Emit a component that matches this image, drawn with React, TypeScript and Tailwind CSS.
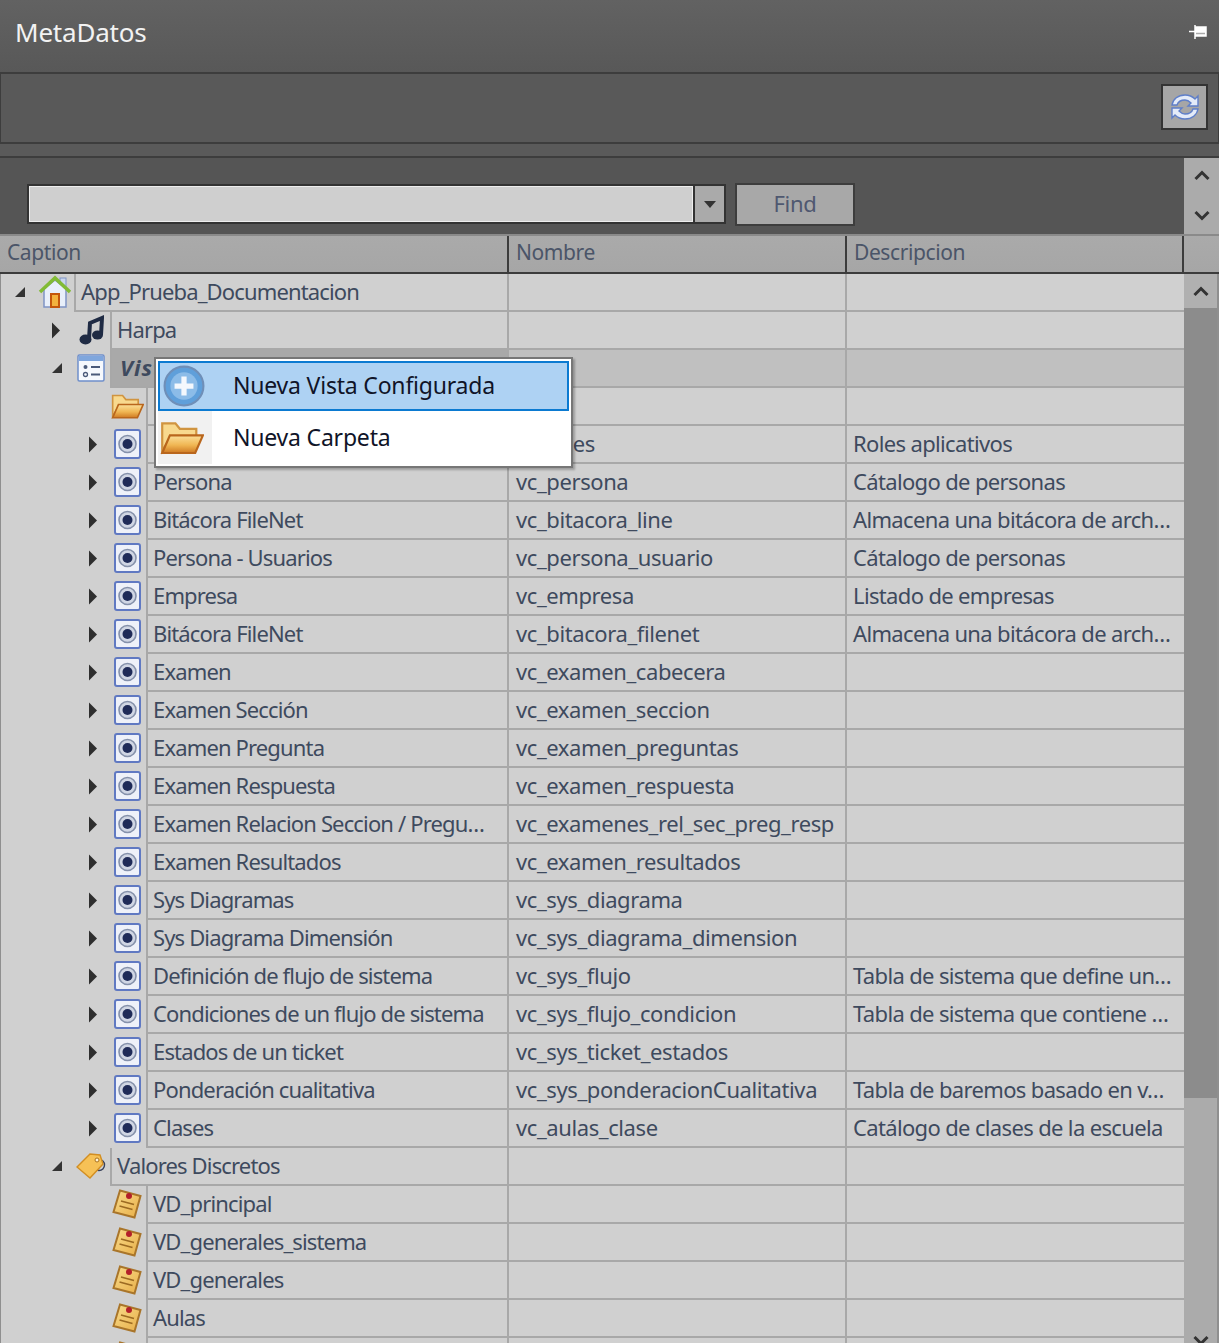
import type { ReactNode } from 'react';

type IconKind = 'home' | 'music' | 'list' | 'folder' | 'view' | 'tag' | 'note';

interface RowData {
  level: 0 | 1 | 2;
  toggle?: 'open' | 'closed';
  icon: IconKind;
  caption?: string;
  name?: string;
  description?: string;
  selected?: boolean;
}

const rows: RowData[] = [
  { level: 0, toggle: 'open', icon: 'home', caption: 'App_Prueba_Documentacion' },
  { level: 1, toggle: 'closed', icon: 'music', caption: 'Harpa' },
  { level: 1, toggle: 'open', icon: 'list', caption: 'Vistas Configuradas', selected: true },
  { level: 2, icon: 'folder', caption: 'Carpeta' },
  { level: 2, toggle: 'closed', icon: 'view', caption: 'Roles', name: 'vc_roles', description: 'Roles aplicativos' },
  { level: 2, toggle: 'closed', icon: 'view', caption: 'Persona', name: 'vc_persona', description: 'Cátalogo de personas' },
  { level: 2, toggle: 'closed', icon: 'view', caption: 'Bitácora FileNet', name: 'vc_bitacora_line', description: 'Almacena una bitácora de arch…' },
  { level: 2, toggle: 'closed', icon: 'view', caption: 'Persona - Usuarios', name: 'vc_persona_usuario', description: 'Cátalogo de personas' },
  { level: 2, toggle: 'closed', icon: 'view', caption: 'Empresa', name: 'vc_empresa', description: 'Listado de empresas' },
  { level: 2, toggle: 'closed', icon: 'view', caption: 'Bitácora FileNet', name: 'vc_bitacora_filenet', description: 'Almacena una bitácora de arch…' },
  { level: 2, toggle: 'closed', icon: 'view', caption: 'Examen', name: 'vc_examen_cabecera' },
  { level: 2, toggle: 'closed', icon: 'view', caption: 'Examen Sección', name: 'vc_examen_seccion' },
  { level: 2, toggle: 'closed', icon: 'view', caption: 'Examen Pregunta', name: 'vc_examen_preguntas' },
  { level: 2, toggle: 'closed', icon: 'view', caption: 'Examen Respuesta', name: 'vc_examen_respuesta' },
  { level: 2, toggle: 'closed', icon: 'view', caption: 'Examen Relacion Seccion / Pregu…', name: 'vc_examenes_rel_sec_preg_resp' },
  { level: 2, toggle: 'closed', icon: 'view', caption: 'Examen Resultados', name: 'vc_examen_resultados' },
  { level: 2, toggle: 'closed', icon: 'view', caption: 'Sys Diagramas', name: 'vc_sys_diagrama' },
  { level: 2, toggle: 'closed', icon: 'view', caption: 'Sys Diagrama Dimensión', name: 'vc_sys_diagrama_dimension' },
  { level: 2, toggle: 'closed', icon: 'view', caption: 'Definición de flujo de sistema', name: 'vc_sys_flujo', description: 'Tabla de sistema que define un…' },
  { level: 2, toggle: 'closed', icon: 'view', caption: 'Condiciones de un flujo de sistema', name: 'vc_sys_flujo_condicion', description: 'Tabla de sistema que contiene …' },
  { level: 2, toggle: 'closed', icon: 'view', caption: 'Estados de un ticket', name: 'vc_sys_ticket_estados' },
  { level: 2, toggle: 'closed', icon: 'view', caption: 'Ponderación cualitativa', name: 'vc_sys_ponderacionCualitativa', description: 'Tabla de baremos basado en v…' },
  { level: 2, toggle: 'closed', icon: 'view', caption: 'Clases', name: 'vc_aulas_clase', description: 'Catálogo de clases de la escuela' },
  { level: 1, toggle: 'open', icon: 'tag', caption: 'Valores Discretos' },
  { level: 2, icon: 'note', caption: 'VD_principal' },
  { level: 2, icon: 'note', caption: 'VD_generales_sistema' },
  { level: 2, icon: 'note', caption: 'VD_generales' },
  { level: 2, icon: 'note', caption: 'Aulas' },
  { level: 2, icon: 'note' },
];

function FolderIcon({ size = 33 }: { size?: number }) {
  return (
    <svg width={size} height={size * 0.8} viewBox="0 0 40 32">
      <defs>
        <linearGradient id="folderFront" x1="0" y1="0" x2="0" y2="1">
          <stop offset="0" stopColor="#fbe09a" />
          <stop offset="0.55" stopColor="#f0b653" />
          <stop offset="1" stopColor="#cf7a22" />
        </linearGradient>
      </defs>
      <path d="M2 28V3h12l4 5h15v7H10L2 28z" fill="#f8d98e" stroke="#d09440" strokeWidth="2" />
      <path d="M2 30L9 14h30l-7 16H2z" fill="url(#folderFront)" stroke="#b9661c" strokeWidth="2" />
    </svg>
  );
}

function RowIcon({ kind }: { kind: IconKind }) {
  if (kind === 'home') {
    return (
      <svg width="34" height="34" viewBox="0 0 34 34">
        <rect x="22" y="3" width="6" height="11" fill="#c9d6ee" stroke="#7f94c4" />
        <path d="M6 14v18h22V14L17 5z" fill="#e8effa" stroke="#7f94c4" strokeWidth="1.5" />
        <path d="M2 17L17 3l15 14" fill="none" stroke="#82bb35" strokeWidth="3.5" />
        <rect x="13" y="19" width="8" height="13" fill="#f3b23e" stroke="#c4560c" strokeWidth="2" />
      </svg>
    );
  }
  if (kind === 'music') {
    return (
      <svg width="25" height="30" viewBox="0 0 25 30">
        <path d="M10 24L11 8l12-5-1 17" fill="none" stroke="#1f2b44" strokeWidth="4" />
        <ellipse cx="6.5" cy="24.5" rx="6" ry="5" fill="#1f2b44" />
        <ellipse cx="18.5" cy="20" rx="5.5" ry="4.5" fill="#1f2b44" />
      </svg>
    );
  }
  if (kind === 'list') {
    return (
      <svg width="28" height="28" viewBox="0 0 28 28">
        <rect x="1" y="1" width="26" height="26" rx="1.5" fill="#f5f8fd" stroke="#6f8fca" strokeWidth="1.5" />
        <rect x="2" y="2" width="24" height="5" fill="#7fa6dd" />
        <circle cx="8.5" cy="13" r="2" fill="#4a5a7a" />
        <circle cx="8.5" cy="20.5" r="2" fill="none" stroke="#4a5a7a" strokeWidth="1.3" />
        <path d="M14 13h9M14 20.5h9" stroke="#4a5a7a" strokeWidth="2" />
      </svg>
    );
  }
  if (kind === 'folder') return <FolderIcon />;
  if (kind === 'view') {
    return (
      <svg width="27" height="30" viewBox="0 0 27 30">
        <rect x="1" y="1" width="25" height="28" rx="2" fill="#eef1f9" stroke="#6079c2" strokeWidth="2" />
        <circle cx="13.5" cy="15" r="8.5" fill="#d0d6e4" stroke="#8591ab" strokeWidth="1.6" />
        <circle cx="13.5" cy="15" r="5" fill="#1f2b58" />
      </svg>
    );
  }
  if (kind === 'tag') {
    return (
      <svg width="30" height="28" viewBox="0 0 30 28">
        <circle cx="23" cy="13" r="5.5" fill="none" stroke="#38415a" strokeWidth="1.4" />
        <path d="M1 15L14 2l10 1 3 9-13 14z" fill="#f6c156" stroke="#d28e22" strokeWidth="1.4" />
        <circle cx="21" cy="8" r="2" fill="#fff4d6" stroke="#a8701d" />
      </svg>
    );
  }
  return (
    <svg width="30" height="30" viewBox="0 0 30 30">
      <defs>
        <linearGradient id="noteFill" x1="0" y1="0" x2="1" y2="1">
          <stop offset="0" stopColor="#f9dc8c" />
          <stop offset="1" stopColor="#e8ae47" />
        </linearGradient>
      </defs>
      <path d="M8 1.5L28.5 7l-6 21.5L1.5 23z" fill="url(#noteFill)" stroke="#a9752a" strokeWidth="2" />
      <path d="M9 12l13 3.5M7.5 17l13 3.5" stroke="#9c6a22" strokeWidth="1.8" />
      <circle cx="17" cy="7" r="3" fill="#b3202a" />
    </svg>
  );
}

function Toggle({ state }: { state: 'open' | 'closed' }) {
  if (state === 'open') {
    return (
      <svg width="12" height="12" viewBox="0 0 12 12">
        <path d="M11 1v10H1z" fill="#333" />
      </svg>
    );
  }
  return (
    <svg width="10" height="17" viewBox="0 0 10 17">
      <path d="M1 0.5l8 8-8 8z" fill="#2e2e2e" />
    </svg>
  );
}

function Chevron({ up }: { up?: boolean }) {
  return (
    <svg className="shrink-0" width="16" height="11" viewBox="0 0 16 11">
      <path d={up ? 'M1.5 9L8 2.5 14.5 9' : 'M1.5 2L8 8.5 14.5 2'} fill="none" stroke="#333" strokeWidth="3" />
    </svg>
  );
}

function TreeRow({ row }: { row: RowData }) {
  const gutter = row.level === 0 ? 'w-[73px]' : row.level === 1 ? 'w-[109px]' : 'w-[145px]';
  const toggleBox = row.level === 0 ? 'w-[35px] pl-[13px]' : row.level === 1 ? 'w-[71px] pl-[50px]' : 'w-[107px] pl-[87px]';
  const cell = row.selected ? 'bg-[#a9a9a9] pl-[8px]' : 'pl-[5px]';
  const plain = row.selected ? 'bg-[#c0c0c0]' : '';
  return (
    <div className="flex h-[38px] shrink-0">
      <div className="flex w-[508px] shrink-0 border-r-2 border-[#a8a8a8]">
        <div className={`${gutter} flex shrink-0 items-center pb-[2px]`}>
          <div className={`${toggleBox} flex shrink-0 items-center`}>{row.toggle && <Toggle state={row.toggle} />}</div>
          <div className="flex w-[38px] shrink-0 items-center justify-center">
            <RowIcon kind={row.icon} />
          </div>
        </div>
        <div className={`${cell} flex min-w-0 flex-1 items-center border-b-2 border-l-2 border-[#a8a8a8] pb-[2px] whitespace-nowrap tracking-[-0.85px]`}>
          <span className={row.selected ? 'font-bold italic tracking-[1px]' : ''}>{row.caption}</span>
        </div>
      </div>
      <div className={`${plain} flex w-[338px] shrink-0 items-center border-r-2 border-b-2 border-[#a8a8a8] pb-[2px] pl-[7px] whitespace-nowrap tracking-[-0.4px]`}>{row.name}</div>
      <div className={`${plain} flex w-[337px] shrink-0 items-center overflow-hidden border-b-2 border-[#a8a8a8] pb-[2px] pl-[6px] whitespace-nowrap tracking-[-0.65px]`}>{row.description}</div>
    </div>
  );
}

function HeaderCell({ width, children }: { width: string; children?: ReactNode }) {
  return <div className={`${width} flex shrink-0 items-center border-r-2 border-[#3c3c3c] pb-[3px] pl-[7px]`}>{children}</div>;
}

export default function App() {
  return (
    <div className="relative h-[1343px] w-[1219px] overflow-hidden bg-[#5a5a5a] text-[22px] text-[#3e4a5e] [font-family:'Noto_Sans',Tahoma,sans-serif]">
      {/* Title */}
      <div className="flex h-[72px] items-center justify-between bg-gradient-to-b from-[#626262] to-[#585858] pb-2 pl-[15px] pr-[12px]">
        <span className="text-[26px] tracking-[-0.2px] text-[#f2f2f2]">MetaDatos</span>
        <svg width="18" height="16" viewBox="0 0 18 16">
          <path d="M6 3h11v9H6zM6 1v14M0 7.5h6" fill="#fff" stroke="#fff" strokeWidth="1.5" />
          <path d="M7 9.5h9" stroke="#aaa" strokeWidth="1.5" />
        </svg>
      </div>

      {/* Toolbar */}
      <div className="flex h-[72px] items-center justify-end border-y-2 border-x border-[#3d3d3d] bg-[#595959] pb-[2px] pr-[10px]">
        <button className="flex h-[46px] w-[47px] items-center justify-center border-2 border-[#333] bg-[#a6a6a6]">
          <svg width="32" height="32" viewBox="0 0 32 32" fill="none" stroke="#5f7fc9" strokeWidth="1.4">
            <path d="M3 14C4 8 9 4 16 4c4 0 7 1 10 4l3-3v10H19l3-3c-2-2-4-3-6-3-4 0-7 2-8 5z" fill="#e4ebf8" />
            <path d="M29 18c-1 6-6 10-13 10-4 0-7-1-10-4l-3 3V17h10l-3 3c2 2 4 3 6 3 4 0 7-2 8-5z" fill="#e4ebf8" />
          </svg>
        </button>
      </div>

      <div className="h-[12px]" />

      {/* Search strip */}
      <div className="flex h-[78px] border-t-2 border-[#3d3d3d] bg-[#555]">
        <div className="flex flex-1 items-start gap-[9px] pl-[27px] pt-[26px]">
          <div className="flex h-[40px] w-[699px] border-2 border-[#333]">
            <div className="flex-1 border border-[#eee] bg-[#cfcfcf]" />
            <div className="flex w-[31px] items-center justify-center border-l-2 border-[#333] bg-[#aaa]">
              <svg width="12" height="7" viewBox="0 0 12 7">
                <path d="M0 0h12L6 7z" fill="#333" />
              </svg>
            </div>
          </div>
          <button className="h-[43px] w-[120px] -translate-y-[1px] border-2 border-[#3d3d3d] bg-[#a8a8a8] pb-[2px] text-[22px] tracking-[-0.3px] text-[#4f5870]">Find</button>
        </div>
        <div className="flex w-[35px] flex-col items-center justify-between bg-[#ababab] pb-[13px] pt-[12px]">
          <Chevron up />
          <Chevron />
        </div>
      </div>

      {/* Column headers */}
      <div className="flex h-[40px] border-y-2 border-b-[#3c3c3c] border-t-[#8a8a8a] bg-gradient-to-b from-[#aaa] to-[#a6a6a6] text-[21px] tracking-[-0.4px] text-[#4b5568]">
        <HeaderCell width="w-[509px]">Caption</HeaderCell>
        <HeaderCell width="w-[338px]">Nombre</HeaderCell>
        <HeaderCell width="w-[337px]">Descripcion</HeaderCell>
      </div>

      {/* Tree grid */}
      <div className="flex h-[1069px] overflow-hidden bg-[#d0d0d0]">
        <div className="flex w-[1184px] shrink-0 flex-col border-l border-[#8f8f8f]">
          {rows.map((row, i) => (
            <TreeRow key={i} row={row} />
          ))}
        </div>
        <div className="flex w-[35px] shrink-0 flex-col border-r-2 border-[#8f8f8f] bg-[#ababab]">
          <div className="flex h-[34px] shrink-0 items-center justify-center bg-[#b0b0b0]">
            <Chevron up />
          </div>
          <div className="h-[790px] shrink-0 bg-[#8c8c8c]" />
          <div className="flex-1" />
          <div className="flex h-[18px] shrink-0 items-start justify-center overflow-hidden pt-[10px]">
            <Chevron />
          </div>
        </div>
      </div>

      {/* Context menu */}
      <div className="absolute left-[154px] top-[357px] flex h-[111px] w-[419px] flex-col border-2 border-[#777] bg-white p-[2px] text-[23px] tracking-[-0.2px] text-[#101428] shadow-[2px_2px_2px_rgba(0,0,0,0.25)]">
        <div className="flex h-[50px] shrink-0 items-center border-2 border-[#0b7ad1] bg-[#aed2f3] pb-[2px]">
          <div className="flex w-[48px] shrink-0 items-center justify-center pt-[2px]">
            <svg width="42" height="42" viewBox="0 0 40 40">
              <circle cx="20" cy="20" r="18.5" fill="#5f9fda" stroke="#6f8fb8" strokeWidth="2" />
              <circle cx="20" cy="20" r="13" fill="#8cbce8" />
              <path d="M20 11v18M11 20h18" stroke="#f4f8fd" strokeWidth="5" />
            </svg>
          </div>
          <span className="ml-[25px]">Nueva Vista Configurada</span>
        </div>
        <div className="flex flex-1 items-center">
          <div className="flex h-full w-[54px] shrink-0 items-center justify-center bg-[#f1f1f1] pr-[6px]">
            <FolderIcon size={44} />
          </div>
          <span className="ml-[21px]">Nueva Carpeta</span>
        </div>
      </div>
    </div>
  );
}
